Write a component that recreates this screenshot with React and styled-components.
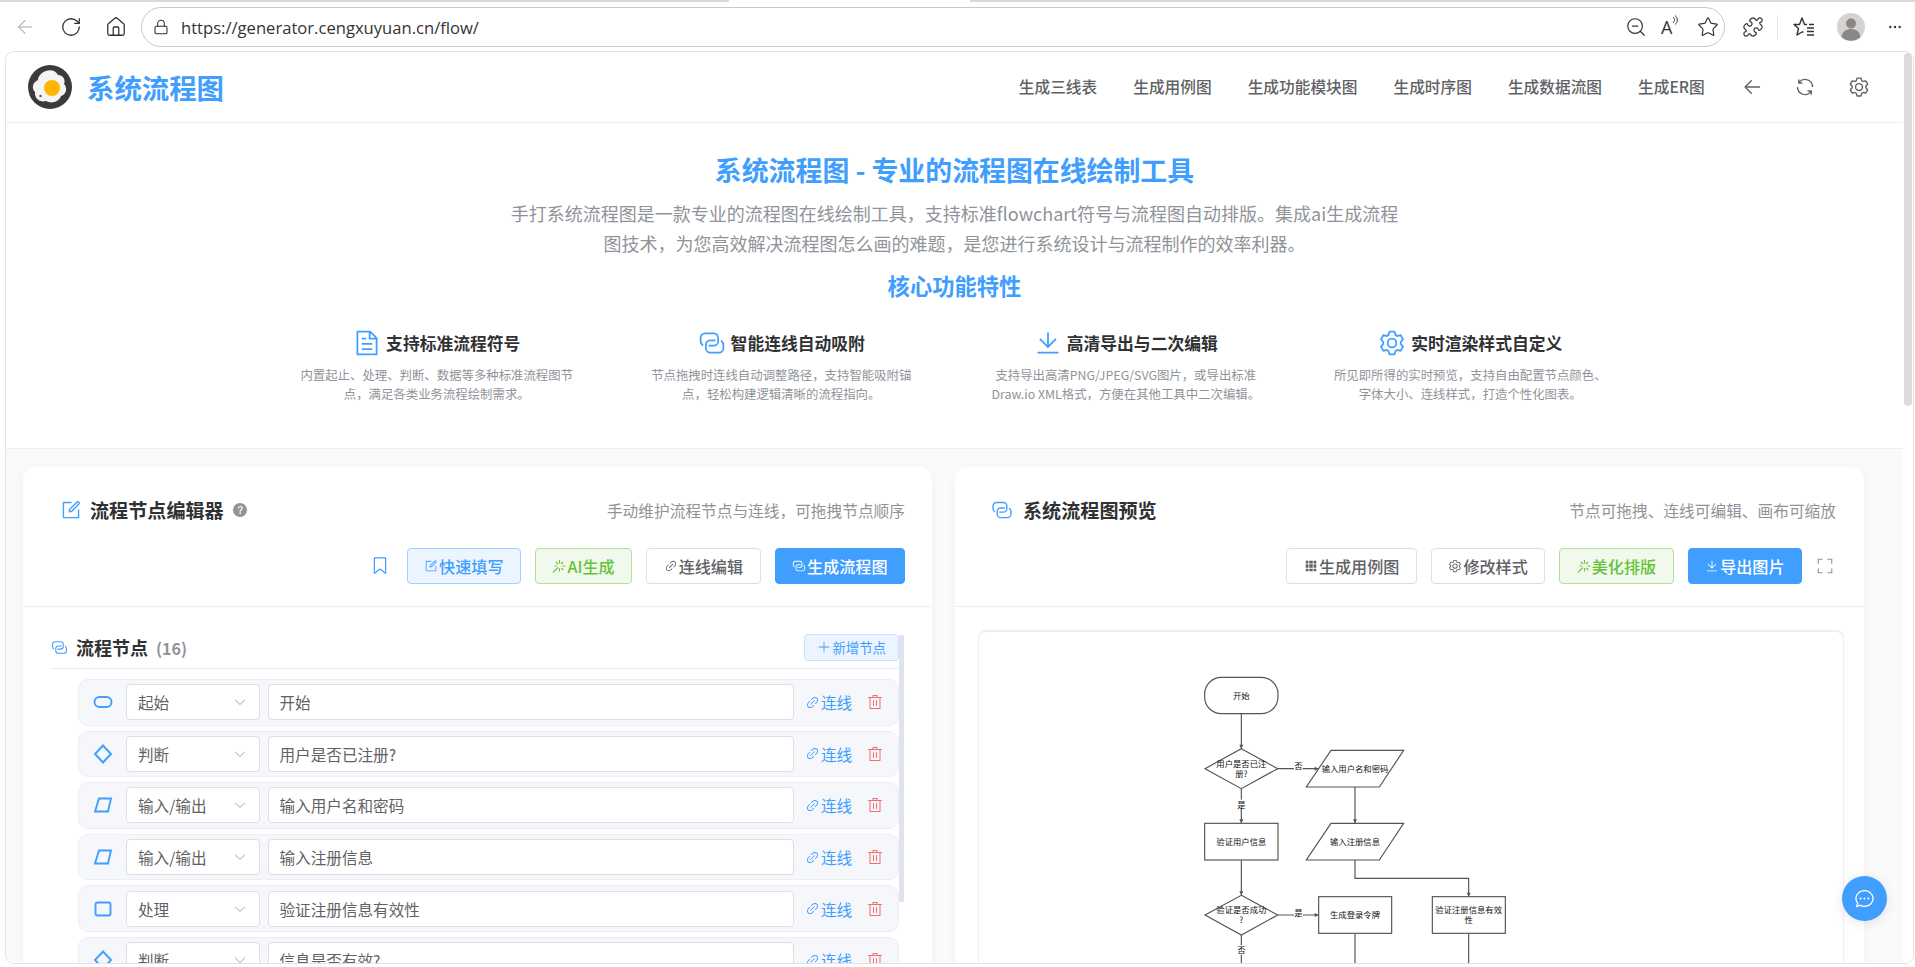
import React from 'react'
import styled, { createGlobalStyle } from 'styled-components'
import { ArrowLeft, RotateCw, House, Lock, ZoomOut, Star, Puzzle, MoreHorizontal } from 'lucide-react'

const GlobalStyle = createGlobalStyle`
  html, body, #root { margin: 0; padding: 0; height: 100%; overflow: hidden; }
  body {
    background: #fff;
    font-family: "Noto Sans CJK SC", "Noto Sans", sans-serif;
    color: #303133;
  }
  * { box-sizing: border-box; }
`

// element style glyphs, all on a 1024 grid
const paths = {
  document: ['M832 384H576V128H192v768h640V384zm-26.496-64L640 154.496V320h165.504zM160 64h480l256 256v608a32 32 0 0 1-32 32H160a32 32 0 0 1-32-32V96a32 32 0 0 1 32-32zm160 448h384v64H320v-64zm0-192h160v64H320v-64zm0 384h384v64H320v-64z'],
  connection: [
    'M640 384v64H448a128 128 0 0 0-128 128v128a128 128 0 0 0 128 128h320a128 128 0 0 0 128-128V576a128 128 0 0 0-64-110.848V394.88c74.56 26.368 128 97.472 128 181.056v128a192 192 0 0 1-192 192H448a192 192 0 0 1-192-192V576a192 192 0 0 1 192-192h192z',
    'M384 640v-64h192a128 128 0 0 0 128-128V320a128 128 0 0 0-128-128H256a128 128 0 0 0-128 128v128a128 128 0 0 0 64 110.848v70.272A192.064 192.064 0 0 1 64 448V320a192 192 0 0 1 192-192h320a192 192 0 0 1 192 192v128a192 192 0 0 1-192 192H384z',
  ],
  download: ['M160 832h704a32 32 0 1 1 0 64H160a32 32 0 1 1 0-64zm384-253.696 236.288-236.352 45.248 45.248L508.8 704 192 387.2l45.248-45.248L480 584.704V128h64v450.304z'],
  setting: ['M600.704 64a32 32 0 0 1 30.464 22.208l35.2 109.376c14.784 7.232 28.928 15.36 42.432 24.512l112.384-24.192a32 32 0 0 1 34.432 15.36L944.32 364.8a32 32 0 0 1-4.032 37.504l-77.12 85.12a357.12 357.12 0 0 1 0 49.024l77.12 85.248a32 32 0 0 1 4.032 37.504l-88.704 153.6a32 32 0 0 1-34.432 15.296L708.8 803.904c-13.44 9.088-27.648 17.28-42.368 24.512l-35.264 109.376A32 32 0 0 1 600.704 960H423.296a32 32 0 0 1-30.464-22.208L357.696 828.48a351.616 351.616 0 0 1-42.56-24.64l-112.32 24.256a32 32 0 0 1-34.432-15.36L79.68 659.2a32 32 0 0 1 4.032-37.504l77.12-85.248a357.12 357.12 0 0 1 0-48.896l-77.12-85.248A32 32 0 0 1 79.68 364.8l88.704-153.6a32 32 0 0 1 34.432-15.296l112.32 24.256c13.568-9.152 27.776-17.408 42.56-24.64l35.2-109.312A32 32 0 0 1 423.232 64H600.64zm-23.424 64H446.72l-36.352 113.088-24.512 11.968a294.113 294.113 0 0 0-34.816 20.096l-22.656 15.36-116.224-25.088-65.28 113.152 79.68 88.192-1.92 27.136a293.12 293.12 0 0 0 0 40.192l1.92 27.136-79.808 88.192 65.344 113.152 116.224-25.024 22.656 15.296a294.113 294.113 0 0 0 34.816 20.096l24.512 11.968L446.72 896h130.688l36.48-113.152 24.448-11.904a288.282 288.282 0 0 0 34.752-20.096l22.592-15.296 116.288 25.024 65.28-113.152-79.744-88.192 1.92-27.136a293.12 293.12 0 0 0 0-40.256l-1.92-27.136 79.808-88.128-65.344-113.152-116.288 24.96-22.592-15.232a287.616 287.616 0 0 0-34.752-20.096l-24.448-11.904L577.344 128zM512 320a192 192 0 1 1 0 384 192 192 0 0 1 0-384zm0 64a128 128 0 1 0 0 256 128 128 0 0 0 0-256z'],
  edit: [
    'M832 512a32 32 0 1 1 64 0v352a32 32 0 0 1-32 32H160a32 32 0 0 1-32-32V160a32 32 0 0 1 32-32h352a32 32 0 0 1 0 64H192v640h640V512z',
    'm469.952 554.24 52.8-7.552L847.104 222.4a32 32 0 1 0-45.248-45.248L477.44 501.44l-7.552 52.8zm422.4-422.4a96 96 0 0 1 0 135.808l-331.84 331.84a32 32 0 0 1-18.112 9.088L436.8 623.68a32 32 0 0 1-36.224-36.224l15.104-105.6a32 32 0 0 1 9.024-18.112l331.904-331.84a96 96 0 0 1 135.744 0z',
  ],
  link: ['M715.648 625.152 670.4 579.904l90.496-90.56c75.008-74.944 85.12-186.368 22.656-248.896-62.528-62.464-173.952-52.352-248.96 22.656L444.16 353.6l-45.248-45.248 90.496-90.496c100.032-99.968 251.968-110.08 339.456-22.656 87.488 87.488 77.312 239.424-22.656 339.456l-90.496 90.496zm-90.496 90.496-90.496 90.496C434.624 906.112 282.688 916.224 195.2 828.8c-87.488-87.488-77.312-239.424 22.656-339.456l90.496-90.496 45.248 45.248-90.496 90.56c-75.008 74.944-85.12 186.368-22.656 248.896 62.528 62.464 173.952 52.352 248.96-22.656l90.496-90.496 45.248 45.248zm0-362.048 45.248 45.248L398.848 670.4 353.6 625.152 625.152 353.6z'],
  trash: ['M160 256H96a32 32 0 0 1 0-64h256V95.936a32 32 0 0 1 32-32h256a32 32 0 0 1 32 32V192h256a32 32 0 1 1 0 64h-64v672a32 32 0 0 1-32 32H192a32 32 0 0 1-32-32V256zm448-64v-64H416v64h192zM224 896h576V256H224v640zm192-128a32 32 0 0 1-32-32V416a32 32 0 0 1 64 0v320a32 32 0 0 1-32 32zm192 0a32 32 0 0 1-32-32V416a32 32 0 0 1 64 0v320a32 32 0 0 1-32 32z'],
  plus: ['M480 480V128a32 32 0 0 1 64 0v352h352a32 32 0 0 1 0 64H544v352a32 32 0 1 1-64 0V544H128a32 32 0 0 1 0-64h352z'],
  grid: ['M640 384v256H384V384h256zm64 0h192v256H704V384zm-64 512H384V704h256v192zm64 0V704h192v192H704zm-64-768v192H384V128h256zm64 0h192v192H704V128zM320 384v256H128V384h192zm0 512H128V704h192v192zm0-768v192H128V128h192z'],
  fullscreen: ['m160 96.064 192 .192a32 32 0 0 1 0 64l-192-.192V352a32 32 0 0 1-64 0V96h64v.064zm0 831.872V928H96V672a32 32 0 1 1 64 0v191.936l192-.192a32 32 0 1 1 0 64l-192 .192zM864 96.064V96h64v256a32 32 0 1 1-64 0V160.064l-192 .192a32 32 0 1 1 0-64l192-.192zm0 831.872-192-.192a32 32 0 0 1 0-64l192 .192V672a32 32 0 1 1 64 0v256h-64v-.064z'],
  back: [
    'M224 480h640a32 32 0 1 1 0 64H224a32 32 0 0 1 0-64z',
    'm237.248 512 265.408 265.344a32 32 0 0 1-45.312 45.312l-288-288a32 32 0 0 1 0-45.312l288-288a32 32 0 1 1 45.312 45.312L237.248 512z',
  ],
  refresh: ['M771.776 794.88A384 384 0 0 1 128 512h64a320 320 0 0 0 555.712 216.448H654.72a32 32 0 1 1 0-64h149.056a32 32 0 0 1 32 32v148.928a32 32 0 1 1-64 0v-50.56zM276.288 295.616h92.992a32 32 0 0 1 0 64H220.16a32 32 0 0 1-32-32V178.56a32 32 0 0 1 64 0v50.56A384 384 0 0 1 896.128 512h-64a320 320 0 0 0-555.776-216.384z'],
  tag: ['M256 128v698.88l196.032-156.864a96 96 0 0 1 119.936 0L768 826.816V128H256zm-32-64h576a32 32 0 0 1 32 32v797.44a32 32 0 0 1-51.968 24.96L531.968 720a32 32 0 0 0-39.936 0L243.968 918.4A32 32 0 0 1 192 893.44V96a32 32 0 0 1 32-32z'],
  chat: [
    'm174.72 855.68 135.296-45.12 23.68 11.84C388.096 849.536 448.576 864 512 864c211.84 0 384-166.784 384-352S723.84 160 512 160 128 326.784 128 512c0 69.12 24.96 139.264 70.848 199.232l22.08 28.8-46.272 115.584zm-45.248 82.56A32 32 0 0 1 89.6 896l58.368-145.92C94.72 680.32 64 596.864 64 512 64 299.904 256 96 512 96s448 203.904 448 416-192 416-448 416a461.056 461.056 0 0 1-206.912-48.384l-175.616 58.56z',
    'M512 563.2a51.2 51.2 0 1 1 0-102.4 51.2 51.2 0 0 1 0 102.4zm192 0a51.2 51.2 0 1 1 0-102.4 51.2 51.2 0 0 1 0 102.4zm-384 0a51.2 51.2 0 1 1 0-102.4 51.2 51.2 0 0 1 0 102.4z',
  ],
  chevron: ['M831.872 340.864 512 652.672 192.128 340.864a30.592 30.592 0 0 0-42.752 0 29.12 29.12 0 0 0 0 41.6L489.664 714.24a32 32 0 0 0 44.672 0l340.288-331.712a29.12 29.12 0 0 0 0-41.728 30.592 30.592 0 0 0-42.752 0z'],
  question: ['M512 64a448 448 0 1 1 0 896 448 448 0 0 1 0-896zm23.744 191.488c-52.096 0-92.928 14.784-123.2 44.352-30.976 29.568-45.76 70.4-45.76 122.496h80.256c0-29.568 5.632-52.8 17.6-68.992 13.376-19.712 35.2-28.864 66.176-28.864 23.936 0 42.944 6.336 56.32 19.712 12.672 13.376 19.712 31.68 19.712 54.912 0 17.6-6.336 34.496-19.008 49.984l-8.448 9.856c-45.76 40.832-73.216 70.4-82.368 89.408-9.856 19.008-14.08 42.24-14.08 68.992v9.856h80.96v-9.856c0-16.896 3.52-31.68 10.56-45.76 6.336-12.672 15.488-24.64 28.16-35.2 33.792-29.568 54.208-48.576 60.544-55.616 16.896-22.528 26.048-51.392 26.048-86.592 0-42.944-14.08-76.736-42.24-101.376-28.16-25.344-65.472-37.312-111.232-37.312zm-12.672 406.208a54.272 54.272 0 0 0-38.72 14.784 49.408 49.408 0 0 0-15.488 38.016c0 15.488 4.928 28.16 15.488 38.016A54.848 54.848 0 0 0 523.072 768c15.488 0 28.16-4.928 38.72-14.784a51.52 51.52 0 0 0 16.192-38.72 51.968 51.968 0 0 0-15.488-38.016 55.936 55.936 0 0 0-39.424-14.784z'],
}

const Icon = ({ name, size = 16, color = 'currentColor' }) => (
  <svg width={size} height={size} viewBox="0 0 1024 1024" fill={color} style={{ flex: 'none' }}>
    {paths[name].map((d) => <path key={d} d={d} />)}
  </svg>
)

// sparkle burst used on the AI buttons, dashes around an open centre
const Sparkle = ({ size = 14 }) => (
  <svg width={size} height={size} viewBox="0 0 14 14" fill="none" stroke="currentColor" strokeWidth="1.1" style={{ flex: 'none' }}>
    <path d="M7.500 1v3.500M7.500 9v3.500M10.500 7h3M2.500 7h2.500M4 3l2 2M11 3 9 5M9.300 9l2 2M6 8.500 1 13.300" />
  </svg>
)

const App_ = styled.div`
  height: 100vh;
  display: flex;
  flex-direction: column;
  overflow: hidden;
  background: #fff;
`

/* ---------- browser chrome ---------- */
const TabEdge = styled.div`
  display: flex;
  height: 2px;
  flex: none;
`
const TabEdgePart = styled.div`
  background: ${(p) => (p.$gap ? '#fff' : '#d9d9d9')};
  width: ${(p) => p.$w || 'auto'};
  flex: ${(p) => (p.$w ? 'none' : 1)};
`
const BrowserBar = styled.div`
  height: 49px;
  flex: none;
  display: flex;
  align-items: center;
  padding: 0 12px 0 14px;
  color: #333;
`
const NavBtn = styled.div`
  width: 22px;
  height: 22px;
  margin-right: 23.5px;
  display: flex;
  align-items: center;
  justify-content: center;
  color: ${(p) => (p.$off ? '#aaa' : '#333')};
  &:nth-child(3) { margin-right: 14px; }
`
const UrlBox = styled.div`
  width: 1586px;
  height: 40px;
  border: 1px solid #c9c9c9;
  border-radius: 20px;
  display: flex;
  align-items: center;
  padding: 0 5px 0 11px;
  margin-top: 1px;
`
const UrlText = styled.div`
  flex: 1;
  margin-left: 12px;
  font-family: "Open Sans", "Noto Sans", sans-serif;
  font-size: 16.6px;
  color: #333;
`
const UrlTools = styled.div`
  display: flex;
  align-items: center;
  gap: 14px;
`
const ReadAloud = styled.div`
  width: 22px;
  font-family: "Open Sans", sans-serif;
  font-size: 18px;
  display: flex;
  align-items: flex-start;
`
const ToolIcons = styled.div`
  display: flex;
  align-items: center;
  margin-left: 17px;
`
const ToolSep = styled.div`
  width: 1px;
  height: 24px;
  background: #e4e4e4;
  margin: 0 14px 0 13px;
`
const Avatar = styled.div`
  width: 28px;
  height: 28px;
  margin: 0 22px 0 21px;
`

/* ---------- page frame ---------- */
const Frame = styled.div`
  flex: 1;
  min-height: 0;
  margin: 0 1px 3px 5px;
  border: 1px solid #e3e3e3;
  border-radius: 9px;
  display: flex;
  overflow: hidden;
  background: #fff;
`
const Viewport = styled.div`
  flex: 1;
  min-width: 0;
  overflow: hidden;
`
const PageScroll = styled.div`
  width: 10px;
  flex: none;
  padding: 1px 1px 0 1px;
  background: #fff;
`
const PageThumb = styled.div`
  height: 353px;
  background: #dcdcdc;
  border-radius: 4px;
`

/* ---------- site header ---------- */
const Header = styled.header`
  height: 71px;
  display: flex;
  align-items: center;
  padding: 0 33px 0 22px;
  border-bottom: 1px solid #ebeef5;
`
const Brand = styled.div`
  display: flex;
  align-items: center;
  gap: 15px;
  flex: 1;
  font-size: 27.4px;
  font-weight: 700;
  color: #409eff;
`
const Nav = styled.nav`
  display: flex;
  align-items: center;
  gap: 36px;
  padding-bottom: 2px;
  font-size: 15.7px;
  font-weight: 500;
  color: #606266;
`
const NavIcons = styled.div`
  display: flex;
  align-items: center;
  gap: 31.6px;
  margin-left: 36px;
  color: #606266;
`

/* ---------- intro ---------- */
const Hero = styled.section`
  height: 326px;
  padding-top: 28px;
  border-bottom: 1px solid #ebeef5;
  text-align: center;
`
const HeroTitle = styled.h1`
  margin: 0;
  font-size: 26.9px;
  line-height: 38px;
  font-weight: 700;
  color: #409eff;
`
const HeroText = styled.p`
  margin: 10px 0 0;
  font-size: 18px;
  line-height: 29.5px;
  color: #909399;
`
const HeroSub = styled.h2`
  margin: 10px 0 0;
  font-size: 22.3px;
  line-height: 34px;
  font-weight: 700;
  color: #409eff;
`
const Features = styled.div`
  display: grid;
  grid-template-columns: repeat(4, 280px);
  justify-content: center;
  column-gap: 64.5px;
  margin: 28px 2px 0 0;
`
const Feature = styled.div`
  display: flex;
  flex-direction: column;
  align-items: center;
`
const FeatureTitle = styled.div`
  display: flex;
  align-items: center;
  gap: 5px;
  height: 26px;
  font-size: 16.8px;
  font-weight: 700;
  color: #303133;
`
const FeatureText = styled.div`
  margin-top: 9.5px;
  font-size: 12.4px;
  line-height: 19px;
  color: #909399;
`

/* ---------- panels ---------- */
const Panels = styled.main`
  display: grid;
  grid-template-columns: 909px 909px;
  column-gap: 23px;
  padding: 18px 0 0 17px;
  background: #fafafa;
  height: 800px;
`
const Card = styled.section`
  background: #fff;
  border-radius: 12px;
  box-shadow: 0 2px 12px rgba(0, 0, 0, 0.04);
`
const CardHead = styled.div`
  height: 140px;
  padding: 29px ${(p) => p.$right}px 0 ${(p) => p.$left}px;
  border-bottom: 1px solid #ebeef5;
`
const TitleRow = styled.div`
  display: flex;
  align-items: center;
  height: 28px;
  margin-bottom: 24px;
`
const CardTitle = styled.h3`
  margin: 0 0 0 ${(p) => p.$gap}px;
  font-size: 19.1px;
  font-weight: 700;
  color: #303133;
`
const TitleHint = styled.span`
  margin-left: 8px;
  display: flex;
`
const CardSub = styled.div`
  margin-left: auto;
  font-size: 15.7px;
  color: #909399;
`
const Actions = styled.div`
  display: flex;
  align-items: center;
  justify-content: flex-end;
  gap: 14px;
`
const tones = {
  light: 'background:#ecf5ff;border-color:#a0cfff;color:#409eff;',
  green: 'background:#f0f9eb;border-color:#b3e19d;color:#67c23a;',
  plain: 'background:#fff;border-color:#dcdfe6;color:#606266;',
  solid: 'background:#409eff;border-color:#409eff;color:#fff;',
}
const ActionBtn = styled.button`
  height: 36px;
  padding: 0 16.5px;
  border: 1px solid;
  border-radius: 4px;
  display: inline-flex;
  align-items: center;
  gap: 1px;
  font: 500 16.1px "Noto Sans CJK SC", sans-serif;
  ${(p) => tones[p.$tone]}
`
const IconSlot = styled.span`
  display: flex;
  margin-right: ${(p) => p.$mr || 0}px;
  color: ${(p) => p.$color || 'inherit'};
`

/* ---------- node editor ---------- */
const EditorBody = styled.div`
  display: flex;
  padding: 27px 28px 0 27px;
`
const EditorMain = styled.div`
  flex: 1;
  min-width: 0;
`
const EditorScroll = styled.div`
  width: 5px;
  flex: none;
  height: 267px;
  margin-top: 1px;
  background: #dfe3ee;
`
const SectionHead = styled.div`
  height: 35px;
  display: flex;
  align-items: center;
  border-bottom: 1px solid #ebeef5;
  padding: 0 0 8px 1px;
`
const SectionTitle = styled.div`
  margin-left: 8px;
  font-size: 18px;
  font-weight: 700;
  color: #303133;
`
const SectionCount = styled.span`
  margin-left: 8px;
  font-size: 16px;
  font-weight: 600;
  color: #909399;
`
const AddBtn = styled.button`
  margin-left: auto;
  height: 27px;
  padding: 0 12px;
  border: 1px solid #c6e2ff;
  border-radius: 4px;
  background: #ecf5ff;
  color: #409eff;
  display: inline-flex;
  align-items: center;
  gap: 1px;
  font: 400 13.4px "Noto Sans CJK SC", sans-serif;
`
const NodeList = styled.div`
  display: flex;
  flex-direction: column;
  gap: 5px;
  padding: 10px 0 0 28px;
`
const NodeRow = styled.div`
  height: 46.6px;
  flex: none;
  display: flex;
  align-items: center;
  background: #f5f7fa;
  border: 1px solid #ebeef5;
  border-radius: 10px;
  padding-left: 14px;
`
const NodeShape = styled.span`
  width: 20px;
  display: flex;
  justify-content: center;
  margin-right: 13px;
`
const TypeSelect = styled.div`
  width: 134px;
  height: 36px;
  display: flex;
  align-items: center;
  justify-content: space-between;
  padding: 0 12px 0 11px;
  background: #fff;
  border: 1px solid #dcdfe6;
  border-radius: 4px;
  font-size: 15.6px;
  color: #606266;
`
const NodeInput = styled.input`
  width: 526px;
  height: 36px;
  margin-left: 7.5px;
  padding: 0 11px;
  background: #fff;
  border: 1px solid #dcdfe6;
  border-radius: 4px;
  font: 400 15.6px "Noto Sans CJK SC", sans-serif;
  color: #606266;
  outline: none;
`
const LinkBtn = styled.div`
  margin-left: 11.5px;
  display: flex;
  align-items: center;
  gap: 1px;
  font-size: 15.6px;
  color: #409eff;
`
const DeleteBtn = styled.div`
  margin-left: 15px;
  display: flex;
`

/* ---------- preview ---------- */
const PreviewBody = styled.div`
  padding: 23px 20px 0 23px;
`
const PreviewBox = styled.div`
  height: 700px;
  padding: 9px 0 0 172px;
  background: #fff;
  border: 1px solid #ebeef5;
  border-top-width: 2px;
  border-radius: 8px;
`
const Chart = styled.svg`
  display: block;
  text {
    font-family: "Noto Sans CJK SC", sans-serif;
    font-size: 25px;
    fill: #111;
    text-anchor: middle;
  }
  .box { fill: #fff; stroke: #555; stroke-width: 3.5; }
  .wire { fill: none; stroke: #555; stroke-width: 3.5; }
  .tip { fill: #555; }
`
const ChatFab = styled.div`
  position: fixed;
  left: 1842px;
  top: 876px;
  width: 45px;
  height: 45px;
  border-radius: 50%;
  background: #409eff;
  box-shadow: 0 2px 12px rgba(0, 0, 0, 0.1);
  display: flex;
  align-items: center;
  justify-content: center;
`

const features = [
  { icon: 'document', title: '支持标准流程符号', text: ['内置起止、处理、判断、数据等多种标准流程图节', '点，满足各类业务流程绘制需求。'] },
  { icon: 'connection', title: '智能连线自动吸附', text: ['节点拖拽时连线自动调整路径，支持智能吸附锚', '点，轻松构建逻辑清晰的流程指向。'] },
  { icon: 'download', title: '高清导出与二次编辑', text: ['支持导出高清PNG/JPEG/SVG图片，或导出标准', 'Draw.io XML格式，方便在其他工具中二次编辑。'] },
  { icon: 'setting', title: '实时渲染样式自定义', text: ['所见即所得的实时预览，支持自由配置节点颜色、', '字体大小、连线样式，打造个性化图表。'] },
]

const nodes = [
  { shape: 'pill', type: '起始', text: '开始' },
  { shape: 'diamond', type: '判断', text: '用户是否已注册?' },
  { shape: 'para', type: '输入/输出', text: '输入用户名和密码' },
  { shape: 'para', type: '输入/输出', text: '输入注册信息' },
  { shape: 'rect', type: '处理', text: '验证注册信息有效性' },
  { shape: 'diamond', type: '判断', text: '信息是否有效?' },
]

const ShapeIcon = ({ shape }) => (
  <svg width="20" height="20" viewBox="0 0 20 20" fill="none" stroke="#409eff" strokeWidth="1.9">
    {shape === 'pill' && <rect x="1.5" y="5" width="17" height="10" rx="5" />}
    {shape === 'diamond' && <path d="M10 1.5 18 10 10 18.5 2 10Z" />}
    {shape === 'para' && <path d="M6 3.5h12l-3 13H2Z" />}
    {shape === 'rect' && <rect x="2.5" y="3.5" width="15" height="13" rx="2" />}
  </svg>
)

const Logo = () => (
  <svg width="44" height="44" viewBox="0 0 44 44">
    <circle cx="22" cy="22" r="22" fill="#3e3a39" />
    <path d="M18 6c5-2 10 0 12 4 5 0 8 5 6 9 4 4 2 11-3 12-2 6-10 8-15 5-6 2-12-3-11-9-4-4-2-10 3-12 0-4 4-8 8-9Z" fill="#f4f4f4" />
    <circle cx="24" cy="23" r="8" fill="#ffb606" />
    <circle cx="12.5" cy="31" r="1.2" fill="#555" />
  </svg>
)

const Arrow = ({ x, y, dir = 'down' }) => (
  <path
    className="tip"
    d={dir === 'down' ? `M${x - 6} ${y - 12}L${x} ${y}L${x + 6} ${y - 12}Z` : `M${x - 12} ${y - 6}L${x} ${y}L${x - 12} ${y + 6}Z`}
  />
)

const Label = ({ x, y, children }) => (
  <>
    <rect x={x - 13} y={y - 15} width="26" height="28" fill="#fff" />
    <text x={x} y={y + 9}>{children}</text>
  </>
)

const FlowChart = () => (
  <Chart width="420" height="327" viewBox="0 0 1260 981">
    <path className="wire" d="M271 218V323M380 383H503M271 443V547M271 657V763M380 822H503M271 882V981M612 438V547M612 657V712H953V767M612 877V981M953 877V981" />
    <Arrow x={271} y={323} /><Arrow x={503} y={383} dir="right" /><Arrow x={271} y={547} />
    <Arrow x={271} y={763} /><Arrow x={503} y={822} dir="right" /><Arrow x={612} y={547} /><Arrow x={953} y={767} />
    <Arrow x={612} y={981} /><Arrow x={953} y={981} /><Arrow x={271} y={981} />

    <rect className="box" x="161" y="109" width="220" height="109" rx="50" />
    <path className="box" d="M271 323 380 383 271 443 162 383Z" />
    <path className="box" d="M540 328H758L685 438H466Z" />
    <path className="box" d="M540 547H758L685 657H466Z" />
    <rect className="box" x="161" y="547" width="220" height="110" />
    <path className="box" d="M271 763 380 822 271 882 162 822Z" />
    <rect className="box" x="503" y="767" width="219" height="110" />
    <rect className="box" x="844" y="767" width="219" height="110" />

    <text x="271" y="175">开始</text>
    <text x="271" y="379">用户是否已注</text>
    <text x="271" y="409">册?</text>
    <text x="612" y="393">输入用户名和密码</text>
    <text x="612" y="612">输入注册信息</text>
    <text x="271" y="612">验证用户信息</text>
    <text x="271" y="817">验证是否成功</text>
    <text x="271" y="846">?</text>
    <text x="612" y="831">生成登录令牌</text>
    <text x="953" y="817">验证注册信息有效</text>
    <text x="953" y="846">性</text>
    <Label x={442} y={375}>否</Label>
    <Label x={271} y={491}>是</Label>
    <Label x={442} y={815}>是</Label>
    <Label x={271} y={928}>否</Label>
  </Chart>
)

const ActionLabel = ({ icon, children }) => (
  <>
    {icon === 'magic' ? <Sparkle /> : <Icon name={icon} size={14} />}
    {children}
  </>
)

export default function App() {
  return (
    <App_>
      <GlobalStyle />
      <TabEdge>
        <TabEdgePart $w="729px" />
        <TabEdgePart $gap $w="241px" />
        <TabEdgePart />
      </TabEdge>
      <BrowserBar>
        <NavBtn $off><ArrowLeft size={26} strokeWidth={1.1} /></NavBtn>
        <NavBtn><RotateCw size={22} strokeWidth={1.4} /></NavBtn>
        <NavBtn><House size={22} strokeWidth={1.4} /></NavBtn>
        <UrlBox>
          <Lock size={16} strokeWidth={1.6} />
          <UrlText>https://generator.cengxuyuan.cn/flow/</UrlText>
          <UrlTools>
            <ZoomOut size={22} strokeWidth={1.3} />
            <ReadAloud>A<svg width="6" height="10" viewBox="0 0 6 10" fill="none" stroke="#333"><path d="M1 2c2 1 2 4 0 6M3 .5c3 2 3 7 0 9" /></svg></ReadAloud>
            <Star size={22} strokeWidth={1.3} />
          </UrlTools>
        </UrlBox>
        <ToolIcons>
          <Puzzle size={22} strokeWidth={1.3} />
          <ToolSep />
          <svg width="24" height="24" viewBox="0 0 24 24" fill="none" stroke="#333" strokeWidth="1.4" strokeLinejoin="round">
            <path d="M15 9.5h-2.5L10 3 7.5 9.5H2l4.5 4L5 20l5-3h1.5" />
            <path d="M15 13h7M15 16.5h7M15 20h7M17 9.5h5" />
          </svg>
          <Avatar>
            <svg width="28" height="28" viewBox="0 0 28 28">
              <circle cx="14" cy="14" r="14" fill="#d5d3cf" />
              <circle cx="14" cy="10.5" r="5" fill="#8a8784" />
              <path d="M4.5 24c1-6 5-8 9.5-8s8.5 2 9.5 8a14 14 0 0 1-19 0Z" fill="#8a8784" />
            </svg>
          </Avatar>
          <MoreHorizontal size={16} strokeWidth={1.6} />
        </ToolIcons>
      </BrowserBar>

      <Frame>
        <Viewport>
          <Header>
            <Brand><Logo />系统流程图</Brand>
            <Nav>
              <span>生成三线表</span>
              <span>生成用例图</span>
              <span>生成功能模块图</span>
              <span>生成时序图</span>
              <span>生成数据流图</span>
              <span>生成ER图</span>
            </Nav>
            <NavIcons>
              <Icon name="back" size={22} />
              <Icon name="refresh" size={22} />
              <Icon name="setting" size={22} />
            </NavIcons>
          </Header>

          <Hero>
            <HeroTitle>系统流程图 - 专业的流程图在线绘制工具</HeroTitle>
            <HeroText>
              手打系统流程图是一款专业的流程图在线绘制工具，支持标准flowchart符号与流程图自动排版。集成ai生成流程<br />
              图技术，为您高效解决流程图怎么画的难题，是您进行系统设计与流程制作的效率利器。
            </HeroText>
            <HeroSub>核心功能特性</HeroSub>
            <Features>
              {features.map((f) => (
                <Feature key={f.title}>
                  <FeatureTitle><Icon name={f.icon} size={28} color="#409eff" />{f.title}</FeatureTitle>
                  <FeatureText>{f.text[0]}<br />{f.text[1]}</FeatureText>
                </Feature>
              ))}
            </Features>
          </Hero>

          <Panels>
            <Card>
              <CardHead $left={37} $right={27}>
                <TitleRow>
                  <Icon name="edit" size={22} color="#409eff" />
                  <CardTitle $gap={8}>流程节点编辑器</CardTitle>
                  <TitleHint><Icon name="question" size={16} color="#909399" /></TitleHint>
                  <CardSub>手动维护流程节点与连线，可拖拽节点顺序</CardSub>
                </TitleRow>
                <Actions>
                  <IconSlot $mr={3} $color="#409eff"><Icon name="tag" size={20} /></IconSlot>
                  <ActionBtn $tone="light"><ActionLabel icon="edit">快速填写</ActionLabel></ActionBtn>
                  <ActionBtn $tone="green"><ActionLabel icon="magic">AI生成</ActionLabel></ActionBtn>
                  <ActionBtn $tone="plain"><ActionLabel icon="link">连线编辑</ActionLabel></ActionBtn>
                  <ActionBtn $tone="solid"><ActionLabel icon="connection">生成流程图</ActionLabel></ActionBtn>
                </Actions>
              </CardHead>
              <EditorBody>
                <EditorMain>
                  <SectionHead>
                    <Icon name="connection" size={17} color="#409eff" />
                    <SectionTitle>流程节点<SectionCount>(16)</SectionCount></SectionTitle>
                    <AddBtn><Icon name="plus" size={14} />新增节点</AddBtn>
                  </SectionHead>
                  <NodeList>
                    {nodes.map((n) => (
                      <NodeRow key={n.text}>
                        <NodeShape><ShapeIcon shape={n.shape} /></NodeShape>
                        <TypeSelect>{n.type}<Icon name="chevron" size={14} color="#a8abb2" /></TypeSelect>
                        <NodeInput defaultValue={n.text} readOnly />
                        <LinkBtn><Icon name="link" size={15} />连线</LinkBtn>
                        <DeleteBtn><Icon name="trash" size={16} color="#f56c6c" /></DeleteBtn>
                      </NodeRow>
                    ))}
                  </NodeList>
                </EditorMain>
                <EditorScroll />
              </EditorBody>
            </Card>

            <Card>
              <CardHead $left={36} $right={28}>
                <TitleRow>
                  <Icon name="connection" size={22} color="#409eff" />
                  <CardTitle $gap={10}>系统流程图预览</CardTitle>
                  <CardSub>节点可拖拽、连线可编辑、画布可缩放</CardSub>
                </TitleRow>
                <Actions>
                  <ActionBtn $tone="plain"><ActionLabel icon="grid">生成用例图</ActionLabel></ActionBtn>
                  <ActionBtn $tone="plain"><ActionLabel icon="setting">修改样式</ActionLabel></ActionBtn>
                  <ActionBtn $tone="green"><ActionLabel icon="magic">美化排版</ActionLabel></ActionBtn>
                  <ActionBtn $tone="solid"><ActionLabel icon="download">导出图片</ActionLabel></ActionBtn>
                  <IconSlot $mr={2} $color="#909399"><Icon name="fullscreen" size={18} /></IconSlot>
                </Actions>
              </CardHead>
              <PreviewBody>
                <PreviewBox><FlowChart /></PreviewBox>
              </PreviewBody>
            </Card>
          </Panels>
        </Viewport>
        <PageScroll><PageThumb /></PageScroll>
      </Frame>

      <ChatFab><Icon name="chat" size={21} color="#fff" /></ChatFab>
    </App_>
  )
}
